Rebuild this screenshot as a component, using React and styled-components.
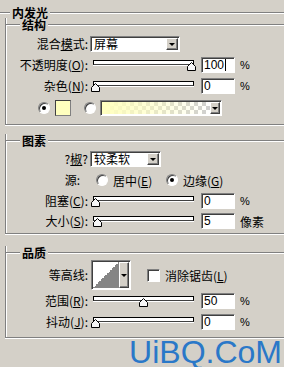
import React from 'react';
import styled, { createGlobalStyle } from 'styled-components';

const GlobalStyle = createGlobalStyle`
  html, body {
    margin: 0;
    padding: 0;
    background: #d4d0c8;
    overflow: hidden;
  }
  body {
    font-family: "Noto Sans CJK SC", sans-serif;
    font-size: 12px;
    color: #000;
  }
`;

const Dialog = styled.div`
  width: 284px;
  height: 367px;
  overflow: hidden;
  padding-top: 6px;
  box-sizing: border-box;
  background: #d4d0c8;
`;

const Head = styled.div`
  display: flex;
  align-items: center;
  height: 14px;
  margin-top: ${p => (p.$inset ? '-6px' : '0')};
`;

const Rule = styled.div`
  height: 0;
  border-top: 1px solid #808080;
  border-bottom: 1px solid #fff;
  width: ${p => (p.$w ? `${p.$w}px` : 'auto')};
  flex: ${p => (p.$w ? 'none' : '1')};
`;

const Title = styled.div`
  font-weight: bold;
  padding: 0 2px;
  line-height: 12px;
  white-space: nowrap;
`;

const Group = styled.section`
  margin: ${p => p.$mt}px 0 0 5px;
  padding-bottom: ${p => p.$pb}px;
  border-left: 1px solid #808080;
  border-bottom: 1px solid #808080;
  box-shadow: inset 1px 0 0 #fff, 0 1px 0 #fff;
`;

const Row = styled.div`
  display: flex;
  align-items: center;
  height: ${p => p.$h || 16}px;
  margin-top: ${p => p.$mt || 0}px;
`;

const Label = styled.div`
  width: 82px;
  padding-right: ${p => p.$pr || 0}px;
  box-sizing: border-box;
  flex: none;
  text-align: right;
  white-space: nowrap;
  line-height: 16px;
`;

const Key = styled.span`
  text-decoration: underline;
  text-underline-offset: 1px;
`;

const Slider = styled.div`
  position: relative;
  width: 106px;
  height: 16px;
  margin-left: 2px;
  padding: 3px 2px 0 3px;
  box-sizing: border-box;
  flex: none;
`;

const Track = styled.div`
  height: 5px;
  box-sizing: border-box;
  border: 1px solid #000;
  border-bottom-color: #404040;
  background: #fff;
  box-shadow: 0 1px 0 #fff;
`;

const ThumbWrap = styled.svg`
  position: absolute;
  top: 5px;
  display: block;
`;

const Field = styled.div`
  display: flex;
  align-items: center;
  width: 34px;
  height: 16px;
  margin-left: 5px;
  padding-left: 2px;
  box-sizing: border-box;
  flex: none;
  background: #fff;
  border: 1px solid;
  border-color: #808080 #fff #fff #808080;
  box-shadow: inset 1px 1px 0 #404040;
  font-family: "Liberation Sans", Arial, sans-serif;
  font-size: 12px;
  line-height: 14px;
`;

const Cursor = styled.span`
  width: 1px;
  height: 12px;
  background: #000;
  margin-left: 1px;
`;

const Unit = styled.span`
  margin-left: 5px;
  font-size: ${p => (p.$cjk ? 12 : 11)}px;
  font-family: ${p => (p.$cjk ? '"Noto Sans CJK SC", sans-serif' : '"Liberation Sans", Arial, sans-serif')};
  white-space: nowrap;
`;

const Inset = styled.div`
  display: flex;
  width: ${p => p.$w}px;
  height: ${p => p.$h || 16}px;
  margin-left: ${p => p.$ml || 0}px;
  padding: 1px;
  box-sizing: border-box;
  flex: none;
  background: #fff;
  border: 1px solid;
  border-color: #808080 #fff #fff #808080;
  box-shadow: inset 1px 1px 0 #404040;
`;

const SelectText = styled.div`
  flex: 1;
  padding-left: 2px;
  line-height: 12px;
  white-space: nowrap;
`;

const ArrowBtn = styled.div`
  display: flex;
  align-items: center;
  justify-content: center;
  width: ${p => p.$w || 12}px;
  flex: none;
  box-sizing: border-box;
  background: #d4d0c8;
  border: 1px solid;
  border-color: #fff #404040 #404040 #fff;
  box-shadow: inset -1px -1px 0 #808080;
`;

const Caret = styled.div`
  width: 0;
  height: 0;
  border-left: 3px solid transparent;
  border-right: 3px solid transparent;
  border-top: 3px solid #000;
`;

const Radio = styled.div`
  display: flex;
  align-items: center;
  justify-content: center;
  width: 12px;
  height: 12px;
  margin-left: ${p => p.$ml || 0}px;
  box-sizing: border-box;
  flex: none;
  border-radius: 50%;
  border: 1px solid;
  border-color: #808080 #fff #fff #808080;
  box-shadow: inset 1px 1px 0 #404040;
  background: #fff;

  &::after {
    content: '';
    width: 4px;
    height: 4px;
    border-radius: 50%;
    background: ${p => (p.$on ? '#000' : 'transparent')};
  }
`;

const Option = styled.div`
  display: flex;
  align-items: center;
  width: ${p => p.$w}px;
  margin-left: ${p => p.$ml || 0}px;
  flex: none;
  white-space: nowrap;
`;

const OptionText = styled.span`
  margin-left: 5px;
`;

const Swatch = styled.div`
  width: 16px;
  height: 16px;
  margin-left: 5px;
  box-sizing: border-box;
  flex: none;
  border: 1px solid #404040;
  border-right-color: #808080;
  border-bottom-color: #808080;
  background: #ffffbe;
`;

const Gradient = styled.div`
  flex: 1;
  background-image:
    linear-gradient(to right, #ffffbe 0%, rgba(255, 255, 190, 0.6) 45%, rgba(255, 255, 190, 0) 100%),
    conic-gradient(#cfcfcf 90deg, #fff 90deg 180deg, #cfcfcf 180deg 270deg, #fff 270deg);
  background-size: 100% 100%, 8px 8px;
`;

const Curve = styled.div`
  flex: 1;
  background: linear-gradient(to bottom right, #fff 50%, #858585 50%);
`;

const Check = styled.div`
  width: 13px;
  height: 13px;
  margin-left: 16px;
  box-sizing: border-box;
  flex: none;
  background: #fff;
  border: 1px solid;
  border-color: #808080 #fff #fff #808080;
  box-shadow: inset 1px 1px 0 #404040;
`;

const CheckText = styled.span`
  margin-left: 5px;
  white-space: nowrap;
`;

const Mark = styled.div`
  margin-top: -1px;
  padding-right: 2px;
  text-align: right;
  font-family: "Liberation Sans", Arial, sans-serif;
  font-size: 32px;
  line-height: 30px;
  color: #2a78c8;
  white-space: nowrap;
`;

const Thumb = ({ value }) => (
  <ThumbWrap width="9" height="9" viewBox="0 0 9 9" style={{ left: 1 + value * 0.96 }}>
    <polygon points="0.5,8.5 0.5,4.5 4.5,0.5 8.5,4.5 8.5,8.5" fill="#f6f6f6" stroke="#000" />
  </ThumbWrap>
);

const SliderRow = ({ label, value, text, unit = '%', cjk, mt, cursor }) => (
  <Row $mt={mt}>
    <Label>{label}</Label>
    <Slider>
      <Track />
      <Thumb value={value} />
    </Slider>
    <Field>
      {text}
      {cursor && <Cursor />}
    </Field>
    <Unit $cjk={cjk}>{unit}</Unit>
  </Row>
);

const Select = ({ w, text }) => (
  <Inset $w={w} $ml={2}>
    <SelectText>{text}</SelectText>
    <ArrowBtn>
      <Caret />
    </ArrowBtn>
  </Inset>
);

export default function App() {
  return (
    <Dialog>
      <GlobalStyle />
      <Head>
        <Rule $w={10} />
        <Title>内发光</Title>
        <Rule />
      </Head>

      <Group $mt={4} $pb={8}>
        <Head $inset>
          <Rule $w={14} />
          <Title>结构</Title>
          <Rule />
        </Head>
        <Row $mt={4}>
          <Label>混合<Key>模</Key>式:</Label>
          <Select w={90} text="屏幕" />
        </Row>
        <SliderRow mt={5} label={<>不透明度(<Key>O</Key>):</>} value={100} text="100" cursor />
        <SliderRow mt={5} label={<>杂色(<Key>N</Key>):</>} value={0} text="0" />
        <Row $mt={6}>
          <Radio $ml={32} $on />
          <Swatch />
          <Radio $ml={13} />
          <Inset $w={122} $ml={4}>
            <Gradient />
            <ArrowBtn $w={10}>
              <Caret />
            </ArrowBtn>
          </Inset>
        </Row>
      </Group>

      <Group $mt={15} $pb={4}>
        <Head $inset>
          <Rule $w={14} />
          <Title>图素</Title>
          <Rule />
        </Head>
        <Row $mt={3}>
          <Label>?<Key>椒</Key>?</Label>
          <Select w={71} text="较柔软" />
        </Row>
        <Row $mt={5}>
          <Label $pr={8}>源:</Label>
          <Option $w={70} $ml={8}>
            <Radio />
            <OptionText>居中(<Key>E</Key>)</OptionText>
          </Option>
          <Option $w={70}>
            <Radio $on />
            <OptionText>边缘(<Key>G</Key>)</OptionText>
          </Option>
        </Row>
        <SliderRow mt={5} label={<>阻塞(<Key>C</Key>):</>} value={0} text="0" />
        <SliderRow mt={4} label={<>大小(<Key>S</Key>):</>} value={2} text="5" unit="像素" cjk />
      </Group>

      <Group $mt={18} $pb={7}>
        <Head $inset>
          <Rule $w={14} />
          <Title>品质</Title>
          <Rule />
        </Head>
        <Row $h={30}>
          <Label>等高线:</Label>
          <Inset $w={40} $h={30} $ml={3}>
            <Curve />
            <ArrowBtn $w={10}>
              <Caret />
            </ArrowBtn>
          </Inset>
          <Check />
          <CheckText>消除锯齿(<Key>L</Key>)</CheckText>
        </Row>
        <SliderRow mt={3} label={<>范围(<Key>R</Key>):</>} value={50} text="50" />
        <SliderRow mt={5} label={<>抖动(<Key>J</Key>):</>} value={0} text="0" />
      </Group>

      <Mark>UiBQ.CoM</Mark>
    </Dialog>
  );
}
